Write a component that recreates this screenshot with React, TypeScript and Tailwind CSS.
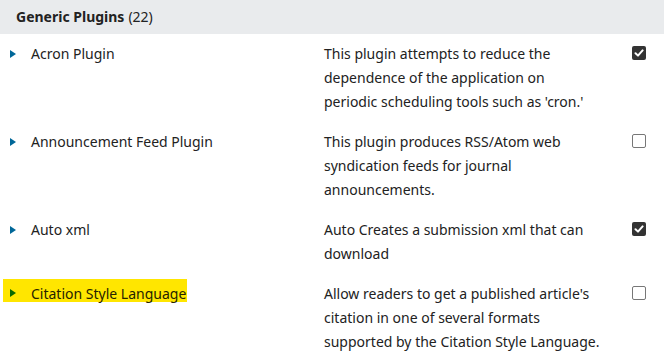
import React from 'react';

type Plugin = {
  name: string;
  description: string;
  enabled: boolean;
  highlight?: boolean;
};

const plugins: Plugin[] = [
  {
    name: 'Acron Plugin',
    description: "This plugin attempts to reduce the dependence of the application on periodic scheduling tools such as 'cron.'",
    enabled: true,
  },
  {
    name: 'Announcement Feed Plugin',
    description: 'This plugin produces RSS/Atom web syndication feeds for journal announcements.',
    enabled: false,
  },
  {
    name: 'Auto xml',
    description: 'Auto Creates a submission xml that can download',
    enabled: true,
  },
  {
    name: 'Citation Style Language',
    description: "Allow readers to get a published article's citation in one of several formats supported by the Citation Style Language.",
    enabled: false,
    highlight: true,
  },
];

function Arrow({ color, className = '' }: { color: string; className?: string }) {
  return (
    <svg width="6" height="8" viewBox="0 0 6 8" className={`shrink-0 ${className}`}>
      <path d="M0 0 L6 4 L0 8 Z" fill={color} />
    </svg>
  );
}

function Checkbox({ checked }: { checked: boolean }) {
  if (checked) {
    return (
      <span className="flex h-[14px] w-[14px] items-center justify-center rounded-[2px] bg-[#333]">
        <svg width="10" height="10" viewBox="0 0 10 10">
          <path d="M1.5 5.2 L4 7.6 L8.6 2.4" stroke="#fff" strokeWidth="2" fill="none" strokeLinecap="round" strokeLinejoin="round" />
        </svg>
      </span>
    );
  }
  return <span className="block h-[14px] w-[14px] rounded-[2px] border border-[#777] bg-white" />;
}

export default function App() {
  return (
    <div className="h-[361px] w-[664px] overflow-hidden bg-white text-[14px] leading-6 text-[#222]" style={{ fontFamily: '"Noto Sans", "Open Sans", sans-serif' }}>
      <div className="flex h-[34px] items-center bg-[#e9ebed] px-4">
        <span className="font-bold">Generic Plugins</span>
        <span className="ml-1">(22)</span>
      </div>
      {plugins.map((p) => (
        <div key={p.name} className="grid grid-cols-[324px_277px_1fr] py-2">
          <div className="flex items-start pl-[10px]">
            {p.highlight ? (
              <span className="-ml-[7px] -mt-[3px] flex h-[23px] items-center bg-[#ffe600] pl-[7px] pr-[1px] text-[#262300]">
                <Arrow color="#0b6a00" className="relative top-[2px]" />
                <span className="relative top-[3px] ml-[15px]">{p.name}</span>
              </span>
            ) : (
              <span className="flex h-6 items-center">
                <Arrow color="#006798" />
                <span className="ml-[15px]">{p.name}</span>
              </span>
            )}
          </div>
          <div>{p.description}</div>
          <div className="flex justify-start pl-[31px] pt-[4px]">
            <Checkbox checked={p.enabled} />
          </div>
        </div>
      ))}
    </div>
  );
}
